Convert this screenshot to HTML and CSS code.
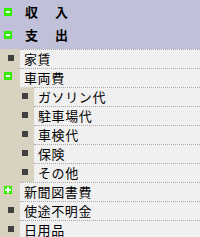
FILE: index.html
```html
<!DOCTYPE html>
<html lang="ja">
<head>
<meta charset="utf-8">
<link rel="stylesheet" href="styles.css">
</head>
<body>
<div class="tree">
  <div class="head">
    <div class="head-row"><span class="tg minus"></span><span class="hl">収　入</span></div>
    <div class="head-row"><span class="tg minus"></span><span class="hl">支　出</span></div>
  </div>
  <div class="row"><div class="lead"><span class="sq"></span></div><div class="cell">家賃</div></div>
  <div class="row"><div class="lead"><span class="tg minus small"></span></div><div class="cell">車両費</div></div>
  <div class="row"><div class="lead lead2"><span class="sq"></span></div><div class="cell">ガソリン代</div></div>
  <div class="row"><div class="lead lead2"><span class="sq"></span></div><div class="cell">駐車場代</div></div>
  <div class="row"><div class="lead lead2"><span class="sq"></span></div><div class="cell">車検代</div></div>
  <div class="row"><div class="lead lead2"><span class="sq"></span></div><div class="cell">保険</div></div>
  <div class="row"><div class="lead lead2"><span class="sq"></span></div><div class="cell">その他</div></div>
  <div class="row"><div class="lead"><span class="tg plus small"></span></div><div class="cell">新聞図書費</div></div>
  <div class="row"><div class="lead"><span class="sq"></span></div><div class="cell">使途不明金</div></div>
  <div class="row"><div class="lead"><span class="sq"></span></div><div class="cell">日用品</div></div>
</div>
</body>
</html>
```

FILE: styles.css
```css
html, body {
  margin: 0;
  padding: 0;
  background: #f0f0f0;
}
body {
  font-family: "Noto Sans CJK JP", "Noto Sans", sans-serif;
  font-size: 13px;
  color: #000;
}
.tree {
  width: 200px;
  height: 237px;
  overflow: hidden;
  background: #f0f0f0;
}
.head {
  background: #c0c0d8;
  height: 49px;
}
.head-row {
  display: flex;
  align-items: flex-start;
  height: 23px;
}
.head-row .tg {
  margin: 8px 0 0 4px;
}
.hl {
  font-weight: bold;
  letter-spacing: 2px;
  margin-left: 13px;
  line-height: 24px;
}
.tg {
  position: relative;
  display: block;
  width: 8px;
  height: 8px;
  background: #33ee00;
  flex: none;
}
.tg.minus::before {
  content: "";
  position: absolute;
  left: 2px;
  top: 3px;
  width: 4px;
  height: 2px;
  background: #fff;
}
.tg.plus::before {
  content: "";
  position: absolute;
  left: 1px;
  top: 3px;
  width: 6px;
  height: 2px;
  background: #fff;
}
.tg.plus::after {
  content: "";
  position: absolute;
  left: 3px;
  top: 1px;
  width: 2px;
  height: 6px;
  background: #fff;
}
.row {
  display: flex;
  height: 19px;
}
.lead {
  width: 20px;
  background: #d8d2c0;
  flex: none;
}
.lead2 {
  width: 34px;
}
.sq {
  display: block;
  width: 6px;
  height: 6px;
  background: #404040;
  margin: 6px 0 0 8px;
}
.lead2 .sq {
  margin-left: 22px;
}
.lead .tg.small {
  margin: 4px 0 0 4px;
}
.cell {
  flex: 1;
  border-top: 1px dotted #a8a8a8;
  background: #f0f0f0;
  padding-left: 4px;
  font-size: 13px;
  line-height: 18px;
  height: 18px;
  letter-spacing: 0.6px;
  white-space: nowrap;
}
```
